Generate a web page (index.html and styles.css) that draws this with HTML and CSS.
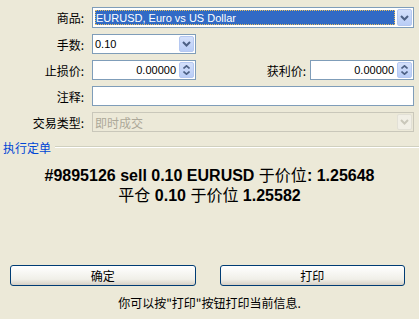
FILE: index.html
```html
<!DOCTYPE html>
<html>
<head>
<meta charset="utf-8">
<link rel="stylesheet" href="styles.css">
</head>
<body>
<div class="dlg">
  <div class="form">
    <div class="row r1">
      <span class="lbl">商品:</span>
      <div class="field combo wide">
        <span class="val sel">EURUSD, Euro vs US Dollar</span>
        <span class="dd"><svg width="9" height="6" viewBox="0 0 9 6"><path d="M1 1 L4.5 4.5 L8 1" fill="none" stroke="#4d6185" stroke-width="2"/></svg></span>
      </div>
    </div>
    <div class="row">
      <span class="lbl">手数:</span>
      <div class="field combo small">
        <span class="val">0.10</span>
        <span class="dd"><svg width="9" height="6" viewBox="0 0 9 6"><path d="M1 1 L4.5 4.5 L8 1" fill="none" stroke="#4d6185" stroke-width="2"/></svg></span>
      </div>
    </div>
    <div class="row">
      <span class="lbl">止损价:</span>
      <div class="field spin small">
        <span class="val num">0.00000</span>
        <span class="sp"><svg width="7" height="4" viewBox="0 0 7 4"><path d="M0.5 3.5 L3.5 0.8 L6.5 3.5" fill="none" stroke="#4d6185" stroke-width="1.6"/></svg><svg width="7" height="4" viewBox="0 0 7 4"><path d="M0.5 0.5 L3.5 3.2 L6.5 0.5" fill="none" stroke="#4d6185" stroke-width="1.6"/></svg></span>
      </div>
      <span class="spacer"></span>
      <span class="lbl2">获利价:</span>
      <div class="field spin small">
        <span class="val num">0.00000</span>
        <span class="sp"><svg width="7" height="4" viewBox="0 0 7 4"><path d="M0.5 3.5 L3.5 0.8 L6.5 3.5" fill="none" stroke="#4d6185" stroke-width="1.6"/></svg><svg width="7" height="4" viewBox="0 0 7 4"><path d="M0.5 0.5 L3.5 3.2 L6.5 0.5" fill="none" stroke="#4d6185" stroke-width="1.6"/></svg></span>
      </div>
    </div>
    <div class="row">
      <span class="lbl">注释:</span>
      <div class="field wide"></div>
    </div>
    <div class="row">
      <span class="lbl">交易类型:</span>
      <div class="field combo wide disabled">
        <span class="val">即时成交</span>
        <span class="dd"><svg width="9" height="6" viewBox="0 0 9 6"><path d="M1 1 L4.5 4.5 L8 1" fill="none" stroke="#c9c7ba" stroke-width="2"/></svg></span>
      </div>
    </div>
  </div>
  <div class="group">
    <span class="gtitle">执行定单</span>
    <span class="gline"></span>
  </div>
  <div class="result">
    <p>#9895126 sell 0.10 EURUSD <span class="cjk">于价位</span>: 1.25648</p>
    <p><span class="cjk">平仓</span> 0.10 <span class="cjk">于价位</span> 1.25582</p>
  </div>
  <div class="buttons">
    <button class="xpbtn">确定</button>
    <button class="xpbtn">打印</button>
  </div>
  <p class="hint">你可以按"打印"按钮打印当前信息.</p>
</div>
</body>
</html>
```

FILE: styles.css
```css
html, body {
  margin: 0;
  padding: 0;
  background: #ece9d8;
}
body {
  width: 419px;
  height: 319px;
  overflow: hidden;
  font-family: "Liberation Sans", "Noto Sans CJK SC", sans-serif;
  font-size: 11px;
  color: #000;
}
.dlg {
  display: flex;
  flex-direction: column;
}
.form {
  padding: 7px 5px 0 0;
  display: flex;
  flex-direction: column;
  gap: 6px;
}
.row {
  display: flex;
  align-items: center;
  height: 20px;
}
.row.r1 { height: 21px; }
.lbl, .lbl2 {
  font-family: "Noto Sans CJK SC", sans-serif;
  font-size: 12px;
  text-align: right;
  white-space: nowrap;
}
.lbl {
  width: 84px;
  margin-right: 8px;
}
.lbl2 {
  margin-right: 4px;
}
.spacer { flex: 1; }
.field {
  box-sizing: border-box;
  height: 100%;
  border: 1px solid #7f9db9;
  background: #fff;
  display: flex;
  align-items: center;
  position: relative;
}
.field.wide { flex: 1; }
.field.small { width: 104px; }
.val {
  flex: 1;
  padding-left: 2px;
  white-space: nowrap;
  overflow: hidden;
}
.val.sel {
  margin: 2px 1px 2px 2px;
  align-self: stretch;
  display: flex;
  align-items: center;
  background: #316ac5;
  color: #fff;
  outline: 1px dotted #e8c060;
  outline-offset: -1px;
  padding-left: 1px;
}
.val.num {
  text-align: right;
  padding-right: 2px;
}
.dd {
  width: 15px;
  align-self: stretch;
  margin: 1px;
  box-sizing: border-box;
  border: 1px solid #b5c8f1;
  border-radius: 2px;
  background: linear-gradient(#d4e0fb, #b9cdf6);
  display: flex;
  align-items: center;
  justify-content: center;
}
.sp {
  width: 15px;
  align-self: stretch;
  margin: 1px;
  box-sizing: border-box;
  border: 1px solid #b5c8f1;
  border-radius: 2px;
  background: linear-gradient(#d4e0fb, #b9cdf6);
  display: flex;
  flex-direction: column;
  align-items: center;
  justify-content: center;
  gap: 2px;
}
.sp svg { display: block; }
.field.disabled {
  border-color: #c9c7ba;
  background: #ece9d8;
}
.field.disabled .val {
  font-family: "Noto Sans CJK SC", sans-serif;
  font-size: 12px;
  color: #aca899;
}
.field.disabled .dd {
  background: #f1efe6;
  border-color: #e2e0d6;
}
.group {
  display: flex;
  align-items: center;
  margin-top: 8px;
  height: 14px;
  padding-left: 3px;
}
.gtitle {
  font-family: "Noto Sans CJK SC", sans-serif;
  font-size: 12px;
  color: #0046d5;
  white-space: nowrap;
}
.gline {
  flex: 1;
  margin-left: 4px;
  height: 0;
  border-top: 1px solid #d0d0bf;
  border-bottom: 1px solid #fff;
}
.result {
  margin-top: 11px;
  text-align: center;
  font-family: "Liberation Sans", "Noto Sans CJK SC", sans-serif;
  font-weight: bold;
  font-size: 16px;
  line-height: 19px;
}
.result p { margin: 0; }
.result .cjk {
  font-family: "Noto Sans CJK SC", sans-serif;
  font-weight: normal;
  font-size: 16px;
}
.buttons {
  margin-top: 60px;
  display: flex;
  gap: 24px;
  padding: 0 14px 0 10px;
}
.xpbtn {
  flex: 1;
  height: 21px;
  box-sizing: border-box;
  border: 1px solid #003c74;
  border-radius: 3px;
  background: linear-gradient(#ffffff, #f0efe8 70%, #d6d0c5);
  font-family: "Noto Sans CJK SC", sans-serif;
  font-size: 12px;
  color: #000;
  padding: 0;
}
.hint {
  margin: 9px 0 0;
  text-align: center;
  font-family: "Noto Sans CJK SC", sans-serif;
  font-size: 12px;
  line-height: 16px;
}
```
